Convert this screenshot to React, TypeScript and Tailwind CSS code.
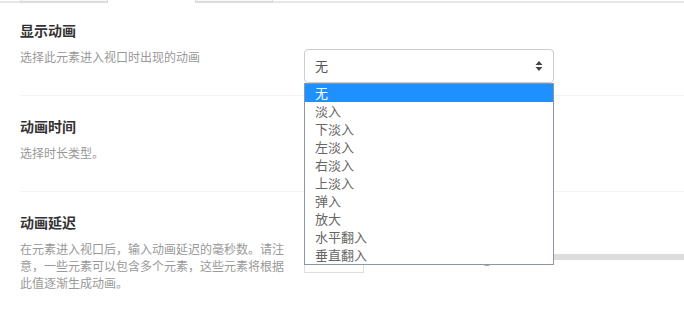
const options = ['无', '淡入', '下淡入', '左淡入', '右淡入', '上淡入', '弹入', '放大', '水平翻入', '垂直翻入'];

function Arrows() {
	return (
		<svg width="8" height="12" viewBox="0 0 8 12" className="text-[#444]">
			<path d="M4 1 L7.5 5 L0.5 5 Z" fill="currentColor" />
			<path d="M4 11 L7.5 7 L0.5 7 Z" fill="currentColor" />
		</svg>
	);
}

function Section({
	title,
	desc,
	children,
	className,
}: {
	title: string;
	desc: React.ReactNode;
	children?: React.ReactNode;
	className: string;
}) {
	return (
		<div className={`flex ml-5 ${className}`}>
			<div className="w-[284px] shrink-0">
				<div className="text-[14px] leading-5 font-bold text-[#333]">{title}</div>
				<div className="mt-2 w-[270px] text-[12px] leading-[17px] text-[#999]">{desc}</div>
			</div>
			<div className="flex-1 relative">{children}</div>
		</div>
	);
}

export default function App() {
	return (
		<div
			className="relative w-[684px] h-[318px] bg-white overflow-hidden"
			style={{ fontFamily: '"Noto Sans CJK SC", "Noto Sans", sans-serif' }}>
			{/* tab strip bottoms */}
			<div className="flex h-[3px]">
				<div className="w-5 border-b-2 border-[#e6e6e6]" />
				<div className="w-[88px] border-b-2 border-x border-[#dcdcdc] bg-[#f7f7f7]" />
				<div className="w-[87px]" />
				<div className="w-[78px] border-b-2 border-x border-[#dcdcdc] bg-[#f7f7f7]" />
				<div className="flex-1 border-b-2 border-[#e6e6e6]" />
			</div>

			<Section
				className="h-[93px] pt-[17px] border-b border-[#f3f3f3]"
				title="显示动画"
				desc="选择此元素进入视口时出现的动画">
				<div className="absolute top-[29px] left-0 w-[250px] h-[34px] border border-[#ccc] rounded-[4px] flex items-center justify-between px-[10px] text-[13px] text-[#555]">
					<span>无</span>
					<Arrows />
				</div>
			</Section>

			<Section
				className="h-[96px] pt-5 border-b border-[#f3f3f3]"
				title="动画时间"
				desc="选择时长类型。">
				<div className="absolute top-[30px] left-0 w-[250px] h-[34px] border border-[#ccc] rounded-[4px]" />
			</Section>

			<Section
				className="h-[126px] pt-5"
				title="动画延迟"
				desc="在元素进入视口后，输入动画延迟的毫秒数。请注意，一些元素可以包含多个元素，这些元素将根据此值逐渐生成动画。">
				<div className="absolute top-[27px] left-0 w-[60px] h-[34px] border border-[#ddd]" />
				<div className="absolute top-[42px] left-[72px] right-0 h-[6px] bg-[#ddd]" />
				<div className="absolute top-[40px] left-[176px] w-[14px] h-[14px] rounded-full bg-white border border-[#999]" />
			</Section>

			{/* open select list */}
			<div className="absolute top-[83px] left-[304px] w-[250px] border border-[#8c96a8] bg-white">
				{options.map((o, i) => (
					<div
						key={o}
						className={`h-[18px] leading-[18px] pl-[10px] text-[13px] ${
							i === 0 ? 'bg-[#1e90ff] text-white' : 'text-[#666]'
						}`}>
						{o}
					</div>
				))}
			</div>
		</div>
	);
}
